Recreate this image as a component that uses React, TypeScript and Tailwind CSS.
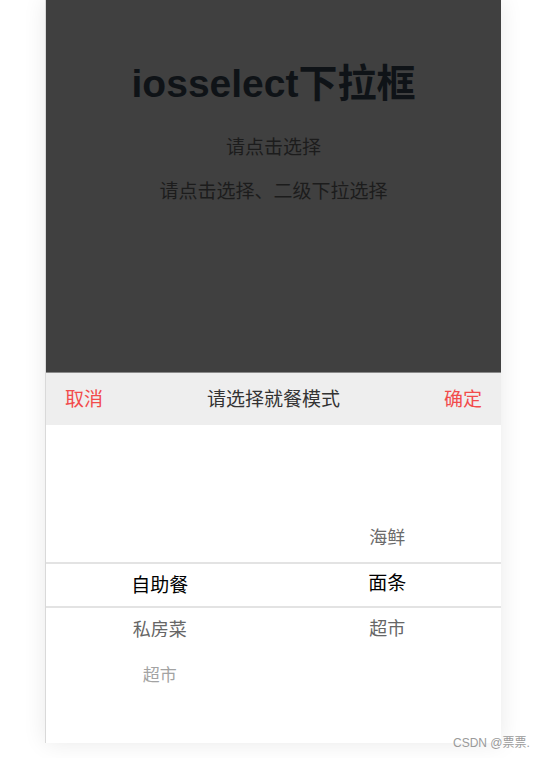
import React from "react";

const cjk = { fontFamily: '"Noto Sans CJK SC", "Noto Sans", sans-serif' };
const title = { fontFamily: '"Liberation Sans", "Noto Sans CJK SC", sans-serif' };

export default function App() {
  return (
    <div className="relative h-[758px] w-[546px] overflow-hidden bg-white" style={cjk}>
      <div className="ml-[45px] flex h-[743px] w-[456px] flex-col border-l border-[#d9d9d9] bg-white shadow-[0_0_22px_rgba(0,0,0,0.09)]">
        <div className="flex h-[372px] flex-col items-center bg-[#404040] pt-[64px]">
          <h1 className="text-[39px] font-bold leading-[39px] text-[#0f1317]" style={title}>
            iosselect下拉框
          </h1>
          <p className="mt-[33px] text-[19px] leading-[19px] text-[#1c1c1c]">请点击选择</p>
          <p className="mt-[25px] text-[19px] leading-[19px] text-[#1c1c1c]">请点击选择、二级下拉选择</p>
        </div>
        <div className="flex h-[53px] items-center justify-between border-t border-[#8a8a8a] bg-[#eeeeee] px-[19px] pb-[3px] text-[19px] leading-[19px]">
          <span className="text-[#f24b4b]">取消</span>
          <span className="text-[#333]">请选择就餐模式</span>
          <span className="text-[#f24b4b]">确定</span>
        </div>
        <div className="relative flex flex-1 bg-white">
          <div className="absolute left-0 right-0 top-[137px] h-[2px] bg-[#e3e3e3]" />
          <div className="absolute left-0 right-0 top-[181px] h-[2px] bg-[#e3e3e3]" />
          <div className="flex flex-1 flex-col items-center pt-[137px]">
            <div className="flex h-[44px] items-center text-[19px] text-black">自助餐</div>
            <div className="flex h-[45px] items-center text-[18px] text-[#666]">私房菜</div>
            <div className="flex h-[45px] items-center text-[17px] text-[#a3a3a3]">超市</div>
          </div>
          <div className="flex flex-1 flex-col items-center pt-[89px]">
            <div className="flex h-[45.5px] items-center text-[18px] text-[#6b6b6b]">海鲜</div>
            <div className="flex h-[45.5px] items-center text-[19px] text-black">面条</div>
            <div className="flex h-[45.5px] items-center text-[18px] text-[#666]">超市</div>
          </div>
        </div>
      </div>
      <div className="absolute left-[453px] top-[736px] text-[12px] leading-[14px] text-[#9a9a9a]" style={title}>
        CSDN @票票.
      </div>
    </div>
  );
}
